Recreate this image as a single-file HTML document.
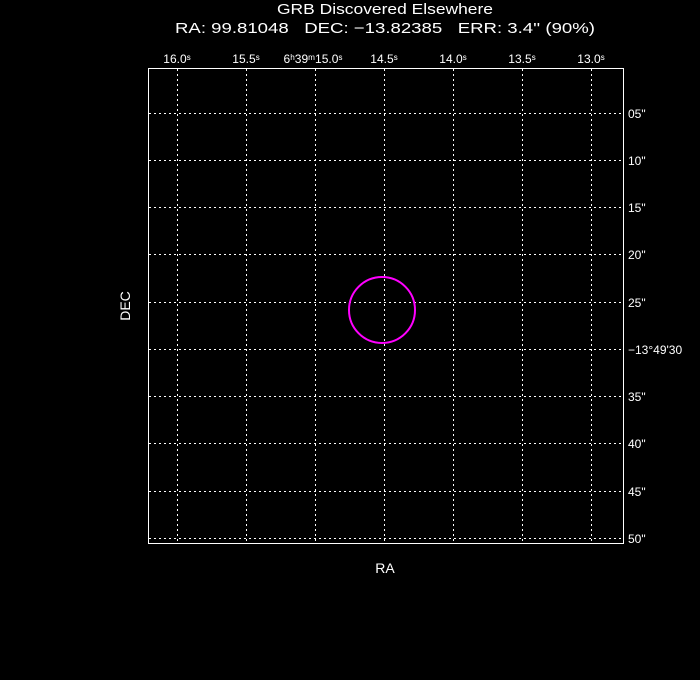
<!DOCTYPE html>
<html><head><style>
html,body{margin:0;padding:0;background:#000;width:700px;height:680px;overflow:hidden}
svg text{font-family:"Liberation Sans",sans-serif;fill:#fff;white-space:pre}
</style></head><body>
<svg width="700" height="680" viewBox="0 0 700 680" xmlns="http://www.w3.org/2000/svg" xml:space="preserve">
<text x="277" y="14" font-size="15" textLength="216" lengthAdjust="spacingAndGlyphs">GRB Discovered Elsewhere</text>
<text x="175" y="33" font-size="15" textLength="420" lengthAdjust="spacingAndGlyphs">RA: 99.81048   DEC: −13.82385   ERR: 3.4'' (90%)</text>
<g stroke="#fff" stroke-width="1" stroke-dasharray="2,3" fill="none">
<path d="M177.5 69V543M246.5 69V543M315.5 69V543M384.5 69V543M453.5 69V543M522.5 69V543M591.5 69V543"/>
<path d="M149 113.5H623M149 160.5H623M149 207.5H623M149 254.5H623M149 302.5H623M149 349.5H623M149 396.5H623M149 443.5H623M149 491.5H623M149 538.5H623"/>
</g>
<rect x="148.5" y="68.5" width="475" height="475" fill="none" stroke="#fff" stroke-width="1"/>
<circle cx="382" cy="310" r="33" fill="none" stroke="#f0f" stroke-width="2"/>
<g font-size="12" text-anchor="middle">
<text x="177" y="63">16.0ˢ</text>
<text x="246" y="63">15.5ˢ</text>
<text x="313" y="63">6ʰ39ᵐ15.0ˢ</text>
<text x="384" y="63">14.5ˢ</text>
<text x="453" y="63">14.0ˢ</text>
<text x="522" y="63">13.5ˢ</text>
<text x="591" y="63">13.0ˢ</text>
</g>
<g font-size="12">
<text x="628" y="118">05"</text>
<text x="628" y="165">10"</text>
<text x="628" y="212">15"</text>
<text x="628" y="259">20"</text>
<text x="628" y="307">25"</text>
<text x="628" y="354">−13°49'30</text>
<text x="628" y="401">35"</text>
<text x="628" y="448">40"</text>
<text x="628" y="496">45"</text>
<text x="628" y="543">50"</text>
</g>
<text x="385" y="573" font-size="14" text-anchor="middle">RA</text>
<text x="130" y="306" font-size="14" text-anchor="middle" transform="rotate(-90 130 306)">DEC</text>
</svg>
</body></html>
